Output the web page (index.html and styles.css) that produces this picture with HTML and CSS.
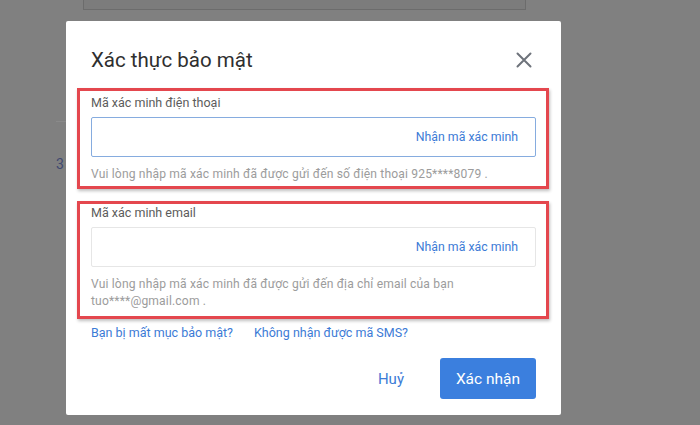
FILE: index.html
```html
<!DOCTYPE html>
<html lang="vi">
<head>
<meta charset="utf-8">
<title>Xác thực bảo mật</title>
<link rel="stylesheet" href="styles.css">
</head>
<body>
  <div class="page">
    <div class="panel"></div>
    <div class="steps">
      <span class="step-line"></span>
      <span class="step-num">3</span>
    </div>
  </div>

  <div class="modal" role="dialog" aria-labelledby="modal-title">
    <div class="modal-header">
      <h2 id="modal-title" class="modal-title">Xác thực bảo mật</h2>
      <button class="close-btn" aria-label="Đóng">
        <svg viewBox="0 0 16 16" width="16" height="16">
          <path d="M1.5 1.5 L14.5 14.5 M14.5 1.5 L1.5 14.5" stroke="currentColor" stroke-width="2" stroke-linecap="round" fill="none"/>
        </svg>
      </button>
    </div>

    <div class="field field-phone">
      <div class="field-label">Mã xác minh điện thoại</div>
      <div class="code-input is-focused">
        <span class="get-code">Nhận mã xác minh</span>
      </div>
      <div class="field-hint">Vui lòng nhập mã xác minh đã được gửi đến số điện thoại 925****8079 .</div>
    </div>

    <div class="field field-email">
      <div class="field-label">Mã xác minh email</div>
      <div class="code-input">
        <span class="get-code">Nhận mã xác minh</span>
      </div>
      <div class="field-hint">Vui lòng nhập mã xác minh đã được gửi đến địa chỉ email của bạn<br>tuo****@gmail.com .</div>
    </div>

    <div class="help-links">
      <a class="link" href="#">Bạn bị mất mục bảo mật?</a>
      <a class="link" href="#">Không nhận được mã SMS?</a>
    </div>

    <div class="modal-footer">
      <button class="btn-cancel">Huỷ</button>
      <button class="btn-primary">Xác nhận</button>
    </div>
  </div>
</body>
</html>
```

FILE: styles.css
```css
* { box-sizing: border-box; }

html, body {
  margin: 0;
  height: 100%;
}

body {
  background: #808080;
  font-family: Roboto, "Noto Sans", "Liberation Sans", sans-serif;
  overflow: hidden;
}

/* dimmed page under the dialog */
.page {
  display: flex;
  flex-direction: column;
}

.panel {
  margin-left: 83px;
  width: 443px;
  height: 10px;
  border: 1px solid #6c6c6c;
  border-top: none;
  background: #7c7c7c;
}

.steps {
  margin-left: 56px;
  margin-top: 111px;
  display: flex;
  flex-direction: column;
  width: 12px;
}

.step-line {
  display: block;
  height: 1px;
  width: 10px;
  background: #8a8a8a;
}

.step-num {
  margin-top: 34px;
  font-size: 14px;
  line-height: 16px;
  color: #3f4870;
}

/* dialog */
.modal {
  position: absolute;
  left: 66px;
  top: 21px;
  width: 495px;
  height: 394px;
  background: #fff;
  border-radius: 2px;
  padding: 25px 29px 16px 25px;
  display: flex;
  flex-direction: column;
}

.modal-header {
  display: flex;
  align-items: center;
  justify-content: space-between;
  height: 28px;
}

.modal-title {
  margin: 0;
  font-size: 20.5px;
  line-height: 28px;
  font-weight: 400;
  color: #2f2f2f;
}

.close-btn {
  border: none;
  background: none;
  padding: 0;
  width: 16px;
  height: 16px;
  color: #6e737b;
  display: flex;
}

/* highlighted form fields */
.field {
  margin-left: -14px;
  margin-right: -17px;
  border: 3px solid #e4474e;
  box-shadow: 1px 2px 3px rgba(0, 0, 0, 0.25);
  padding: 3px 10px 3px 11px;
}

.field-phone {
  margin-top: 14px;
}

.field-email {
  margin-top: 12px;
  padding-top: 0;
  padding-bottom: 6px;
}

.field-label {
  font-size: 12.5px;
  line-height: 18px;
  color: #5c5c5c;
  margin-bottom: 5px;
}

.code-input {
  height: 40px;
  border: 1px solid #e6e6e6;
  border-radius: 2px;
  display: flex;
  align-items: center;
  justify-content: flex-end;
  padding-right: 17px;
}

.code-input.is-focused {
  border-color: #86acdf;
}

.get-code {
  font-size: 12.3px;
  color: #3c7bd6;
}

.field-hint {
  margin-top: 9px;
  font-size: 12.1px;
  letter-spacing: 0.15px;
  line-height: 17px;
  color: #9c9c9c;
}

.help-links {
  margin-top: 5px;
  display: flex;
  gap: 21px;
}

.link {
  font-size: 12.5px;
  line-height: 17px;
  color: #3c7bd6;
  text-decoration: none;
}

.modal-footer {
  margin-top: auto;
  display: flex;
  justify-content: flex-end;
  align-items: center;
  gap: 22px;
  margin-right: -4px;
}

.btn-cancel {
  border: none;
  background: none;
  padding: 0 14px;
  font-family: inherit;
  font-size: 15px;
  color: #3c7bd6;
}

.btn-primary {
  width: 96px;
  height: 41px;
  border: none;
  border-radius: 3px;
  background: #3b7fde;
  color: #fff;
  font-family: inherit;
  font-size: 15.5px;
}
```
